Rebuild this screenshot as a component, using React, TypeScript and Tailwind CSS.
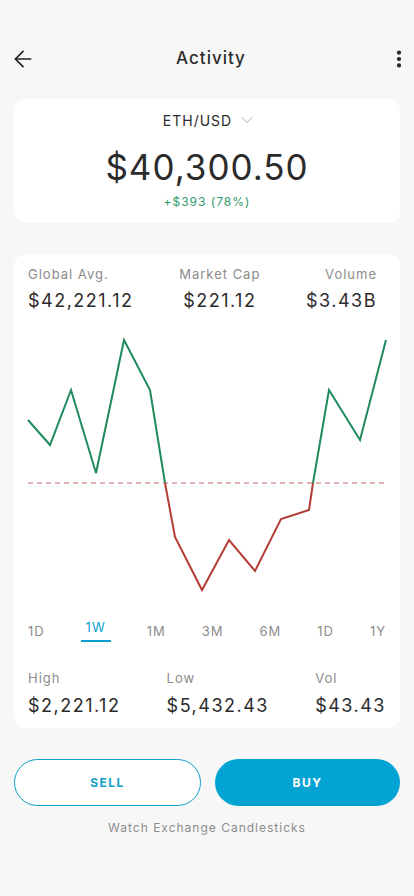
import { ArrowLeft, ChevronDown, EllipsisVertical } from "lucide-react"

const ranges = ["1D", "1W", "1M", "3M", "6M", "1D", "1Y"]

// chart points in card-local coords (x: card left = 0, y: svg top = 0)
const upA = "14,95 36,120 57,65 82,148 110,15 136,65 151,158"
const down = "151,158 161,212 188,265 215,215 241,246 267,194 295,185 299,158"
const upB = "299,158 315,65 346,115 372,15"

export default function App() {
  return (
    <div className="min-h-[896px] w-full bg-[#f7f7f7] pt-[39px] text-[#2b2b2b]" style={{ fontFamily: "Inter, 'Noto Sans', sans-serif" }}>
      {/* header */}
      <div className="flex h-10 items-center pl-[10px] pr-[4px]">
        <div className="w-8">
          <ArrowLeft size={26} strokeWidth={1.6} className="text-[#222]" />
        </div>
        <p className="flex-1 pl-[2px] text-center text-[17px] font-medium tracking-[1px]">Activity</p>
        <div className="flex w-8 justify-end">
          <EllipsisVertical size={22} strokeWidth={2.6} className="text-[#222]" />
        </div>
      </div>

      {/* price card */}
      <div className="mx-[14px] mt-5 flex flex-col items-center rounded-xl bg-white pt-[11px] pb-[13px]">
        <div className="flex h-5 items-center gap-[5px] pl-[6px]">
          <p className="text-[14px] tracking-[1px]">ETH/USD</p>
          <ChevronDown size={20} strokeWidth={1.3} className="text-[#cfcfcf]" />
        </div>
        <p className="mt-[17px] text-[35px] leading-10 tracking-[1px]">$40,300.50</p>
        <p className="mt-[7px] text-xs leading-4 tracking-[1px] text-[#2f9a6a]">+$393 (78%)</p>
      </div>

      {/* chart card */}
      <div className="mx-[14px] mt-[31px] rounded-xl bg-white px-[14px] pt-[12px] pb-[10px]">
        <div className="flex justify-between pr-[9px]">
          <div>
            <p className="text-[13px] leading-4 tracking-[1px] text-[#8c8c8c]">Global Avg.</p>
            <p className="mt-[7px] text-lg leading-6 tracking-[1.5px]">$42,221.12</p>
          </div>
          <div className="text-center">
            <p className="text-[13px] leading-4 tracking-[1px] text-[#8c8c8c]">Market Cap</p>
            <p className="mt-[7px] text-lg leading-6 tracking-[1.5px]">$221.12</p>
          </div>
          <div className="text-right">
            <p className="text-[13px] leading-4 tracking-[1px] text-[#8c8c8c]">Volume</p>
            <p className="mt-[7px] text-lg leading-6 tracking-[1.5px]">$3.43B</p>
          </div>
        </div>

        <svg viewBox="0 0 386 280" className="-mx-[14px] mt-[12px] block h-[280px] w-[386px]">
          <line x1="14" y1="158" x2="372" y2="158" stroke="#d99a9a" strokeWidth="1.5" strokeDasharray="5 4" />
          <polyline points={upA} fill="none" stroke="#1f8a5c" strokeWidth="2" />
          <polyline points={down} fill="none" stroke="#b43d36" strokeWidth="2" />
          <polyline points={upB} fill="none" stroke="#1f8a5c" strokeWidth="2" />
        </svg>

        <div className="mt-[18px] flex justify-between">
          {ranges.map((r, i) => (
            <div key={i} className="flex flex-col items-center">
              <p className={`text-[13px] leading-4 tracking-[1px] ${i === 1 ? "-mt-1 text-[#0aa0d0]" : "text-[#8c8c8c]"}`}>{r}</p>
              {i === 1 && <div className="mt-[5px] h-[2px] w-[30px] bg-[#0aa0d0]" />}
            </div>
          ))}
        </div>

        <div className="mt-[28px] flex justify-between">
          <div>
            <p className="text-[13px] leading-4 tracking-[1px] text-[#8c8c8c]">High</p>
            <p className="mt-[8px] text-lg leading-6 tracking-[1.5px]">$2,221.12</p>
          </div>
          <div>
            <p className="text-[13px] leading-4 tracking-[1px] text-[#8c8c8c]">Low</p>
            <p className="mt-[8px] text-lg leading-6 tracking-[1.5px]">$5,432.43</p>
          </div>
          <div>
            <p className="text-[13px] leading-4 tracking-[1px] text-[#8c8c8c]">Vol</p>
            <p className="mt-[8px] text-lg leading-6 tracking-[1.5px]">$43.43</p>
          </div>
        </div>
      </div>

      {/* actions */}
      <div className="mx-[14px] mt-[31px] flex gap-[14px]">
        <button className="flex h-[47px] flex-1 items-center justify-center rounded-full border border-[#129fcc] bg-white text-[12px] font-bold tracking-[1.5px] text-[#129fcc]">
          SELL
        </button>
        <button className="flex h-[47px] flex-1 items-center justify-center rounded-full bg-[#03a3d3] text-[12px] font-bold tracking-[1.5px] text-white">
          BUY
        </button>
      </div>
      <p className="mt-[14px] text-center text-xs leading-4 tracking-[1px] text-[#8c8c8c]">Watch Exchange Candlesticks</p>
    </div>
  )
}
